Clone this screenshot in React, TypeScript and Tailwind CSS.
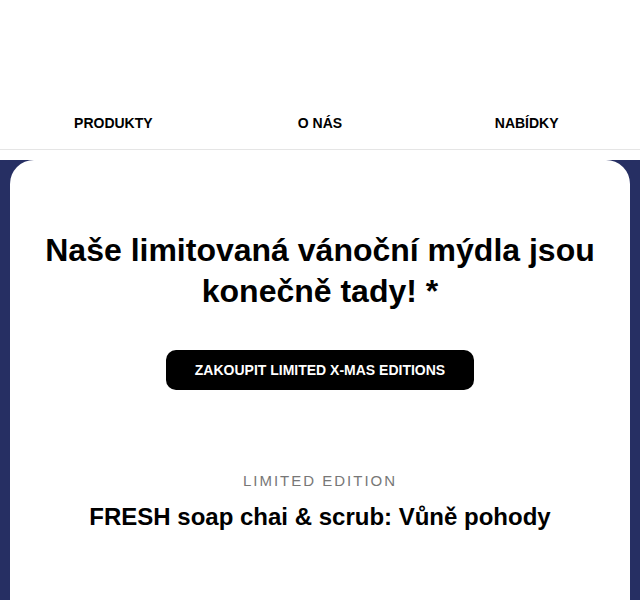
const FONT = "'Liberation Sans', Arial, sans-serif";

const NAV = ["PRODUKTY", "O NÁS", "NABÍDKY"];

export default function App() {
  return (
    <div className="min-h-[600px] bg-white" style={{ fontFamily: FONT }}>
      <header className="h-[150px] border-b border-[#e5e5e5] flex items-end">
        <nav className="grid grid-cols-3 w-full px-[10px] pb-[17px]">
          {NAV.map((item) => (
            <a key={item} className="text-center text-[14px] font-bold text-black leading-[18px]">
              {item}
            </a>
          ))}
        </nav>
      </header>
      <div className="h-[10px]" />
      <section className="bg-[#262f63] px-[10px] min-h-[440px] flex">
        <div className="flex-1 bg-white rounded-t-[24px] flex flex-col items-center pt-[70px]">
          <h1 className="text-[32px] leading-[41px] font-bold text-black text-center max-w-[580px]">
            Naše limitovaná vánoční mýdla jsou konečně tady! *
          </h1>
          <button className="mt-[38px] h-[40px] px-[29px] rounded-[10px] bg-black text-white text-[14px] font-bold">
            ZAKOUPIT LIMITED X-MAS EDITIONS
          </button>
          <p className="mt-[81px] text-[15px] tracking-[2px] text-[#777777] leading-[20px]">
            LIMITED EDITION
          </p>
          <h2 className="mt-[11px] text-[24px] font-bold text-black leading-[30px]">
            FRESH soap chai &amp; scrub: Vůně pohody
          </h2>
        </div>
      </section>
    </div>
  );
}
